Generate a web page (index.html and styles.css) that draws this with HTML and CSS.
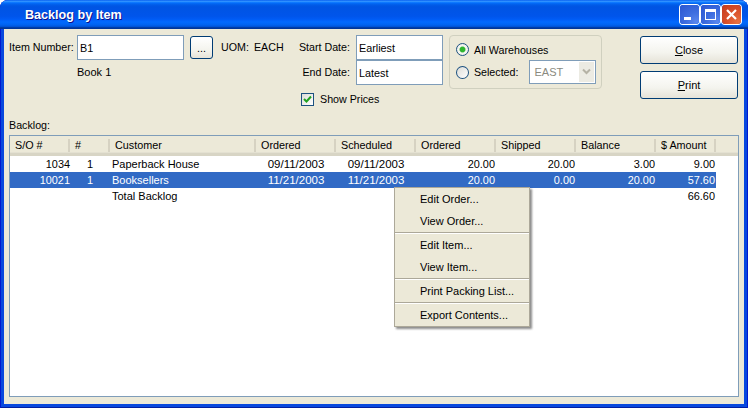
FILE: index.html
```html
<!DOCTYPE html>
<html lang="en">
<head>
  <meta charset="UTF-8">
  <title>Backlog by Item</title>
  <link rel="stylesheet" href="styles.css">
</head>
<body>
  <div class="window">
    <div class="titlebar">
      <span class="title">Backlog by Item</span>
      <div class="controls">
        <div class="ctl ctl-min"><svg width="19" height="19" viewBox="0 0 19 19"><rect x="4" y="12" width="7" height="3" fill="#fff"/></svg></div>
        <div class="ctl ctl-max"><svg width="19" height="19" viewBox="0 0 19 19"><path d="M4 4h11v11H4z M5 7v7h9V7z" fill="#fff" fill-rule="evenodd"/></svg></div>
        <div class="ctl ctl-close"><svg width="19" height="19" viewBox="0 0 19 19"><path d="M5 5l9 9M14 5l-9 9" stroke="#fff" stroke-width="2.2" fill="none"/></svg></div>
      </div>
    </div>

    <div class="client">
      <div class="top">
        <div class="item-col">
          <div class="item-row">
            <label class="item-label">Item Number:</label>
            <div class="field field-item">B1</div>
            <div class="btn btn-dots">...</div>
            <span class="uom">UOM:</span>
            <span class="uom-val">EACH</span>
          </div>
          <div class="desc">Book 1</div>
        </div>

        <div class="date-col">
          <div class="date-grid">
            <label>Start Date:</label>
            <div class="field">Earliest</div>
            <label>End Date:</label>
            <div class="field">Latest</div>
          </div>
          <div class="check-row">
            <span class="check"><svg width="11" height="11" viewBox="0 0 11 11"><path d="M2 5l2.5 2.5L9 2.5" stroke="#21a121" stroke-width="2" fill="none"/></svg></span>
            <span>Show Prices</span>
          </div>
        </div>

        <div class="group">
          <div class="radio-row">
            <span class="radio on"></span>
            <span>All Warehouses</span>
          </div>
          <div class="radio-row radio-row2">
            <span class="radio"></span>
            <span class="sel-label">Selected:</span>
            <div class="select">
              <span>EAST</span>
              <span class="select-arrow"><svg width="11" height="8" viewBox="0 0 11 8"><path d="M2 1.5l3.5 3.5L9 1.5" stroke="#b5b2a5" stroke-width="2" fill="none"/></svg></span>
            </div>
          </div>
        </div>

        <div class="actions">
          <div class="btn btn-big"><span><u>C</u>lose</span></div>
          <div class="btn btn-big"><span><u>P</u>rint</span></div>
        </div>
      </div>

      <div class="list-label">Backlog:</div>
      <div class="list">
        <div class="row head">
          <span>S/O #</span><span>#</span><span>Customer</span><span>Ordered</span><span>Scheduled</span><span>Ordered</span><span>Shipped</span><span>Balance</span><span>$ Amount</span>
        </div>
        <div class="row">
          <span class="r">1034</span><span class="ln">1</span><span class="cust">Paperback House</span><span class="d">09/11/2003</span><span class="d">09/11/2003</span><span class="r">20.00</span><span class="r">20.00</span><span class="r">3.00</span><span class="r">9.00</span>
        </div>
        <div class="row selected">
          <span class="r">10021</span><span class="ln">1</span><span class="cust">Booksellers</span><span class="d">11/21/2003</span><span class="d">11/21/2003</span><span class="r">20.00</span><span class="r">0.00</span><span class="r">20.00</span><span class="r">57.60</span>
        </div>
        <div class="row">
          <span></span><span></span><span class="cust">Total Backlog</span><span></span><span></span><span></span><span></span><span></span><span class="r">66.60</span>
        </div>
      </div>
    </div>

    <div class="menu">
      <div class="menu-item">Edit Order...</div>
      <div class="menu-item">View Order...</div>
      <div class="menu-sep"></div>
      <div class="menu-item">Edit Item...</div>
      <div class="menu-item">View Item...</div>
      <div class="menu-sep"></div>
      <div class="menu-item">Print Packing List...</div>
      <div class="menu-sep"></div>
      <div class="menu-item">Export Contents...</div>
    </div>
  </div>
</body>
</html>
```

FILE: styles.css
```css
* {
  margin: 0;
  padding: 0;
  box-sizing: border-box;
}

body {
  width: 748px;
  height: 408px;
  background: #fff;
  overflow: hidden;
  font-family: "Liberation Sans", Arial, sans-serif;
  font-size: 10.7px;
  color: #000;
}

.window {
  position: relative;
  width: 748px;
  height: 408px;
  display: flex;
  flex-direction: column;
  background: #0848de;
  border-radius: 8px 8px 0 0;
  box-shadow: inset 1px 0 #0019cf, inset -1px 0 #0019cf, inset 0 -1px #001ea0;
}

/* title bar */
.titlebar {
  height: 29px;
  display: flex;
  align-items: center;
  justify-content: space-between;
  padding: 0 7px 0 25px;
  border-radius: 8px 8px 0 0;
  background: linear-gradient(180deg, #0058ee 0%, #3593ff 4%, #288eff 6%, #127dff 8%, #036ffc 10%, #0262ee 14%, #0057e5 20%, #0054e3 24%, #0055eb 56%, #005bf5 66%, #026afe 76%, #0062ef 86%, #0052d6 92%, #0040ab 94%, #003092 100%);
}

.title {
  color: #fff;
  font-size: 12.6px;
  font-weight: bold;
  text-shadow: 1px 1px #0f1089;
}

.controls {
  display: flex;
  gap: 2px;
}

.ctl {
  width: 19px;
  height: 19px;
  border-radius: 3px;
  box-shadow: 0 0 0 1px #fff;
  display: flex;
}

.ctl svg {
  display: block;
}

.ctl-min,
.ctl-max {
  background: radial-gradient(circle at 85% 90%, #5a87ee 0%, #3f6fe0 40%, #2a55d0 100%);
}

.ctl-close {
  background: radial-gradient(circle at 85% 90%, #e8703f 0%, #d9502a 50%, #c23a1c 100%);
}

/* client area */
.client {
  flex: 1;
  margin: 0 4px 4px;
  background: #ece9d8;
  display: flex;
  flex-direction: column;
}

.top {
  height: 88px;
  padding: 6px 6px 0 5px;
  display: flex;
  align-items: flex-start;
}

.field {
  height: 25px;
  padding: 0 2px;
  line-height: 24px;
  font-size: 10.8px;
  background: #fff;
  border: 1px solid #7f9db9;
}

.item-col {
  width: 286px;
}

.item-row {
  display: flex;
  align-items: flex-start;
  line-height: 24px;
}

.item-label {
  width: 68px;
}

.field-item {
  width: 107px;
}

.btn {
  display: flex;
  align-items: center;
  justify-content: center;
  background: linear-gradient(180deg, #fff 0%, #f4f4ee 60%, #e6e3d8 100%);
  border: 1px solid #003c74;
  border-radius: 3px;
}

.btn-dots {
  width: 23px;
  height: 23px;
  margin: 1px 0 0 6px;
}

.uom {
  margin-left: 8px;
}

.uom-val {
  margin-left: 5px;
}

.desc {
  padding: 5px 0 0 68px;
  font-size: 11px;
  line-height: 14px;
}

.date-grid {
  display: grid;
  grid-template-columns: 55px 87px;
  grid-auto-rows: 25px;
  column-gap: 6px;
}

.date-grid label {
  text-align: right;
  line-height: 24px;
}

.check-row {
  display: flex;
  align-items: center;
  gap: 6px;
  height: 14px;
  margin: 7px 0 0 6px;
}

.check {
  width: 13px;
  height: 13px;
  display: block;
  border: 1px solid #1c5180;
  background: linear-gradient(135deg, #dcdcd7, #fff);
}

.check svg {
  display: block;
}

/* warehouses */
.group {
  width: 153px;
  height: 54px;
  margin-left: 6px;
  padding: 7px 5px 0 6px;
  border: 1px solid #d0d0bf;
  border-radius: 4px;
}

.radio-row {
  display: flex;
  align-items: center;
  gap: 5px;
  height: 13px;
}

.radio-row2 {
  height: 24px;
  margin-top: 4px;
}

.radio {
  width: 13px;
  height: 13px;
  border-radius: 50%;
  border: 1px solid #1c5180;
  background: linear-gradient(135deg, #dcdcd7, #fff);
}

.radio.on {
  background: radial-gradient(circle, #2fb52f 0, #2fb52f 2.5px, #9fdc9f 3px, #f6f6f2 3.6px, #e6e6e0 100%);
}

.sel-label {
  width: 50px;
}

.select {
  width: 68px;
  height: 24px;
  padding: 1px 1px 1px 5px;
  display: flex;
  align-items: center;
  justify-content: space-between;
  font-size: 11px;
  color: #8a8a80;
  background: #fff;
  border: 1px solid #7f9db9;
}

.select-arrow {
  width: 15px;
  height: 20px;
  display: flex;
  align-items: center;
  justify-content: center;
  background: #ecebe3;
}

.actions {
  margin-left: auto;
  margin-top: 1px;
  display: flex;
  flex-direction: column;
  gap: 7px;
}

.btn-big {
  width: 98px;
  height: 28px;
  font-size: 11px;
}

/* list */
.list-label {
  height: 18px;
  line-height: 17px;
  padding-left: 5px;
}

.list {
  flex: 1;
  margin: 0 5px 7px;
  background: #fff;
  border: 1px solid #7f9db9;
}

.row {
  height: 16px;
  width: 706px;
  padding-left: 1px;
  display: grid;
  grid-template-columns: 59px 40px 146px 80px 80px 80px 80px 80px 60px;
  line-height: 16px;
  font-size: 11.5px;
  white-space: nowrap;
}

.row .r {
  font-size: 10.9px;
  text-align: right;
  padding-right: 1px;
}

.row .r:first-child {
  padding-right: 0;
}

.row .ln {
  font-size: 11px;
  text-align: center;
}

.row .cust {
  font-size: 11px;
  padding-left: 2px;
}

.row .d {
  text-align: center;
}

.selected {
  background: #316ac5;
  color: #fff;
}

.head {
  width: auto;
  height: 20px;
  padding-top: 3px;
  padding-bottom: 4px;
  line-height: 13px;
  font-size: 10.8px;
  background: #ece9d8;
  border-bottom: 3px solid #d8d5c5;
  box-shadow: inset 0 -1px #e4e1d2;
}

.head span {
  height: 13px;
  padding-left: 5px;
  border-right: 2px solid #d6d2c2;
}

.head span:first-child {
  padding-left: 4px;
}

/* context menu */
.menu {
  position: absolute;
  left: 394px;
  top: 187px;
  width: 136px;
  height: 140px;
  background: #ece9d8;
  border: 1px solid #aca899;
  box-shadow: 2px 2px 2px rgba(0, 0, 0, 0.45);
}

.menu-item {
  height: 22px;
  line-height: 22px;
  padding-left: 25px;
  font-size: 11px;
}

.menu-sep {
  height: 2px;
  background: #aca899;
  border-bottom: 1px solid #fff;
}
```
